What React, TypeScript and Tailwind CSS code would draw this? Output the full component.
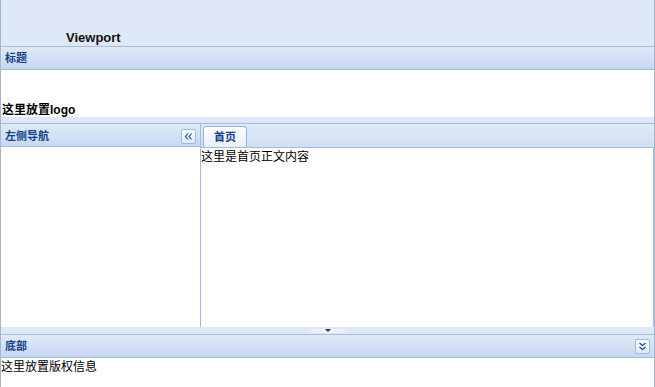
import React from 'react';

const font = "font-['Liberation_Sans','Noto_Sans_CJK_SC',sans-serif]";

function PanelHeader({ title, tool, lower }: { title: string; tool?: React.ReactNode; lower?: boolean }) {
  return (
    <div
      className={
        'flex h-[24px] items-center justify-between border-y border-[#a3bcdc] bg-gradient-to-b from-[#e0eaf7] to-[#c6d9f1] px-[4px] ' +
        (lower ? 'pt-[3px]' : 'pt-[1px]')
      }
    >
      <span className="text-[11px] font-bold text-[#15428b]">{title}</span>
      {tool}
    </div>
  );
}

function ToolButton({ dir }: { dir: 'left' | 'down' }) {
  return (
    <div className="flex h-[15px] w-[15px] items-center justify-center rounded-[2px] border border-[#99bbe8] bg-gradient-to-b from-white to-[#dfe9f5]">
      <svg width="9" height="9" viewBox="0 0 9 9" fill="none" stroke="#15428b" strokeWidth="1.1">
        {dir === 'left' ? (
          <>
            <path d="M4 1.5 L1.5 4.5 L4 7.5" />
            <path d="M7.5 1.5 L5 4.5 L7.5 7.5" />
          </>
        ) : (
          <>
            <path d="M1.5 1 L4.5 3.5 L7.5 1" />
            <path d="M1.5 5 L4.5 7.5 L7.5 5" />
          </>
        )}
      </svg>
    </div>
  );
}

export default function App() {
  return (
    <div className={`${font} flex h-[387px] w-[655px] flex-col overflow-hidden border-x border-[#a4b7cf] bg-[#dfe8f6] text-[12px] text-black`}>
      {/* North */}
      <div className="h-[46px] pl-[65px] pt-[29px]">
        <span className="text-[13px] font-bold leading-[15px] text-[#111]">Viewport</span>
      </div>
      <PanelHeader title="标题" />
      <div className="flex h-[47px] items-end bg-white pl-[1px]">
        <span className="text-[12px] font-bold leading-[14px]">这里放置logo</span>
      </div>
      <div className="h-[6px] bg-[#dfe8f6]" />

      {/* Middle */}
      <div className="flex h-[204px]">
        <div className="flex w-[200px] flex-col border-r border-[#a3bcdc]">
          <PanelHeader title="左侧导航" tool={<ToolButton dir="left" />} lower />
          <div className="flex-1 bg-white" />
        </div>
        <div className="flex flex-1 flex-col">
          <div className="flex h-[25px] items-end border-y border-[#a3bcdc] bg-gradient-to-b from-[#e0eaf7] to-[#cedff3] pl-[2px]">
            <div className="flex h-[21px] w-[44px] items-center justify-center rounded-t-[3px] border border-b-0 border-[#8db2e3] bg-gradient-to-b from-white to-[#e7eff9] pt-[1px]">
              <span className="text-[11px] font-bold text-[#15428b]">首页</span>
            </div>
          </div>
          <div className="flex-1 border-r border-[#a3bcdc] bg-white">
            <div className="text-[12px] leading-[18px]">这里是首页正文内容</div>
          </div>
        </div>
      </div>

      {/* Splitter */}
      <div className="flex h-[7px] items-center justify-center bg-[#dfe8f6]">
        <div className="flex h-[4px] w-[34px] items-start justify-center bg-[#eef3fa]">
          <svg width="6" height="4" viewBox="0 0 6 4">
            <path d="M0 0 L6 0 L3 3 Z" fill="#333" />
          </svg>
        </div>
      </div>

      {/* South */}
      <PanelHeader title="底部" tool={<ToolButton dir="down" />} />
      <div className="flex-1 bg-white">
        <div className="text-[12px] leading-[18px]">这里放置版权信息</div>
      </div>
    </div>
  );
}
